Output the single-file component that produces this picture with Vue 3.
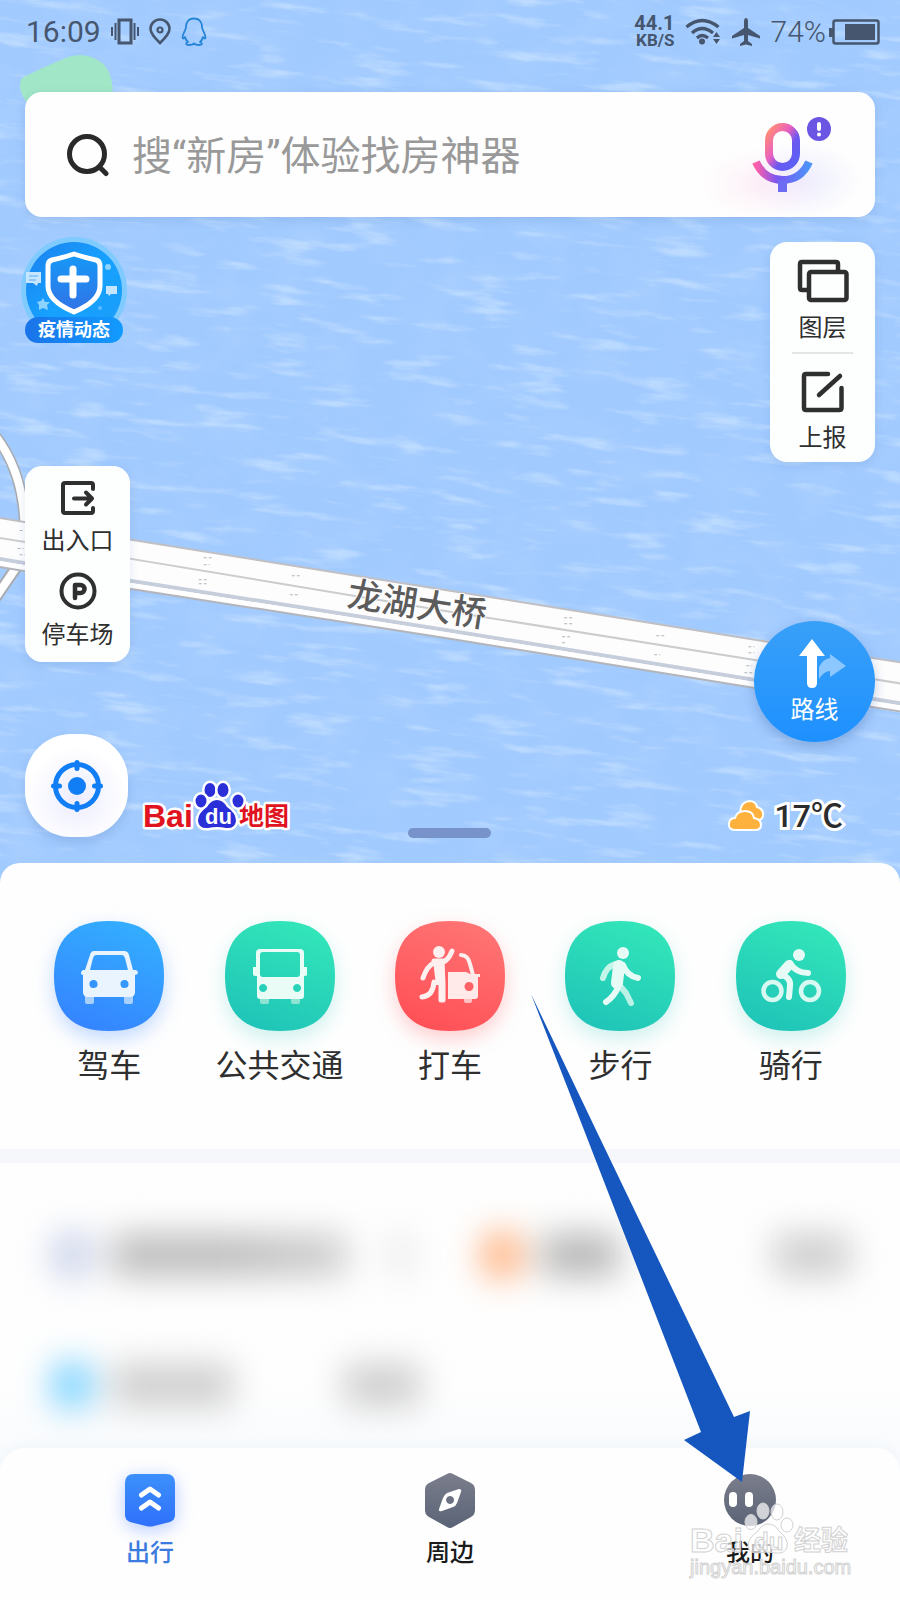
<script setup>
import { ref } from 'vue'

const keyword = ref('')

const modes = [
  { id: 'drive', label: '驾车', from: '#33aeff', to: '#3584ff', glow: 'rgba(53,132,255,.3)' },
  { id: 'bus', label: '公共交通', from: '#33e6b9', to: '#1fc4b8', glow: 'rgba(31,196,184,.22)' },
  { id: 'taxi', label: '打车', from: '#ff7474', to: '#ff5056', glow: 'rgba(255,80,86,.28)' },
  { id: 'walk', label: '步行', from: '#33e6b9', to: '#1fc4b8', glow: 'rgba(31,196,184,.22)' },
  { id: 'ride', label: '骑行', from: '#33e6b9', to: '#1fc4b8', glow: 'rgba(31,196,184,.22)' },
]
</script>

<template>
  <div class="page">
    <section class="map">
      <svg class="canvas" viewBox="0 0 900 882" preserveAspectRatio="xMidYMin slice" aria-hidden="true">
        <defs>
          <filter id="ripple" x="0" y="0" width="100%" height="100%">
            <feTurbulence type="fractalNoise" baseFrequency=".016 .09" numOctaves="5" seed="8" />
            <feColorMatrix values="0 0 0 0 .78  0 0 0 0 .91  0 0 0 0 1  3.6 0 0 0 -1.95" />
          </filter>
          <filter id="swell" x="0" y="0" width="100%" height="100%">
            <feTurbulence type="fractalNoise" baseFrequency=".02 .03" numOctaves="4" seed="3" />
            <feColorMatrix values="0 0 0 0 .5  0 0 0 0 .7  0 0 0 0 .97  2 0 0 0 -.8" />
          </filter>
        </defs>
        <rect width="900" height="882" fill="#a1caff" />
        <g transform="rotate(6 450 445)">
          <rect x="-100" y="-100" width="1100" height="1100" filter="url(#swell)" opacity=".25" />
          <rect x="-100" y="-100" width="1100" height="1100" filter="url(#ripple)" opacity=".38" />
        </g>
        <path d="M22 79 Q24 76 66 58 Q82 51 98 60 Q113 68 113 92 L113 110 H34 Q16 92 22 79Z" fill="#a1e6c6" />
        <path d="M-6 433 Q24 470 25 526" fill="none" stroke="#a9abb0" stroke-width="11" />
        <path d="M-6 433 Q24 470 25 526" fill="none" stroke="#fff" stroke-width="8" />
        <path d="M20 562 L-6 600" stroke="#a9abb0" stroke-width="12" />
        <path d="M20 562 L-6 600" stroke="#fff" stroke-width="8" />
        <path d="M-2 517 L130 539 L450 590 L767 641 L902 662 V712 L753 687 L450 638 L130 588 L-2 566Z" fill="#fdfdfe" />
        <path d="M-2 517 L130 539 L450 590 L767 641 L902 662" fill="none" stroke="#c0bfc3" stroke-width="2" />
        <path d="M-2 537 L130 558 L450 611 L753 659 L902 683" fill="none" stroke="#cbcccd" stroke-width="2" />
        <path d="M-2 558 L130 580 L450 630 L753 679 L902 703" fill="none" stroke="#c6cddb" stroke-width="4" />
        <path d="M-2 562 L130 584 L450 634 L753 683 L902 707" fill="none" stroke="#fff" stroke-width="4" />
        <path d="M-2 566 L130 588 L450 638 L753 687 L902 711" fill="none" stroke="#b3b5ba" stroke-width="2" />
        <g stroke="#b3b6ba" stroke-width="1" stroke-dasharray="3 2">
          <path d="M204 557h8M204 564h6M199 579h8M199 583h8M292 575h9M290 594h9M564 617h9M564 623h9M562 636h9M562 642h5M656 635h9M654 654h6M748 646h6M748 652h6M746 665h6M744 672h8M20 530h4M18 548h6M20 554h6" />
        </g>
        <text class="bridge" transform="translate(346 605) rotate(9)" x="0" y="0">龙湖大桥</text>
      </svg>

      <header class="status">
        <div class="status-side">
          <span class="clock">16:09</span>
          <svg width="28" height="28" viewBox="0 0 28 28" fill="none" stroke="#45566e">
            <rect x="8" y="2" width="12" height="23" stroke-width="3" />
            <path d="M1 9v9M4.500 5v17M23.500 5v17M27 9v9" stroke-width="2" />
          </svg>
          <svg width="22" height="28" viewBox="0 0 22 28" fill="none" stroke="#45566e" stroke-width="2.600">
            <path d="M11 25 Q1.500 16 1.500 11 A9.500 9.500 0 0 1 20.500 11 Q20.500 16 11 25Z" />
            <circle cx="11" cy="12" r="2.500" stroke-width="2.200" />
          </svg>
          <svg width="26" height="30" viewBox="0 0 26 30" fill="none" stroke="#2684d8" stroke-width="1.800" stroke-linejoin="round">
            <path d="M13 1.500 C7 1.500 5 6 5 10 C5 13 2 16 1.500 20 C1.500 22 2.500 22 4 20 C4.500 22 5.500 24 7 25 C4 26.500 4.500 28 8 28 C11 28 12 27.500 13 26.500 C14 27.500 15 28 18 28 C21.500 28 22 26.500 19 25 C20.500 24 21.500 22 22 20 C23.500 22 24.500 22 24.500 20 C24 16 21 13 21 10 C21 6 19 1.500 13 1.500Z" />
          </svg>
        </div>
        <div class="status-side right-side">
          <span class="speed"><b>44.1</b><b class="unit">KB/S</b></span>
          <svg width="36" height="28" viewBox="0 0 36 28" fill="none" stroke="#45566e" stroke-width="3.200">
            <path d="M1.500 9 Q17 -4 33.500 9M7 15 Q17 6 28 15M12 20 Q17 15 23 20" />
            <circle cx="17" cy="23.500" r="3" fill="#45566e" stroke="none" />
            <path d="M28 19l3.500-5 3.500 5zM28 21l3.500 5 3.500-5z" fill="#45566e" stroke="none" />
          </svg>
          <svg width="30" height="30" viewBox="0 0 30 30" fill="#45566e">
            <path d="M15 1 Q17 1 17 5 V11 L29 19 V21.500 L17 18 V24 L21 27 V29 L15 27.500 L9 29 V27 L13 24 V18 L1 21.500 V19 L13 11 V5 Q13 1 15 1Z" />
          </svg>
          <span class="percent">74%</span>
          <svg width="51" height="26" viewBox="0 0 51 26">
            <rect x="4.500" y="1.500" width="45" height="23" rx="2" fill="none" stroke="#45566e" stroke-width="2.500" />
            <path d="M0 9h4v9h-4z M16 5h30v16h-30z" fill="#45566e" />
          </svg>
        </div>
      </header>

      <form class="search" @submit.prevent>
        <svg width="44" height="44" viewBox="0 0 44 44" fill="none" stroke="#2a2a2a" stroke-width="5" stroke-linecap="round">
          <circle cx="21" cy="21" r="17.500" />
          <path d="M34 34.500l6 6" />
        </svg>
        <input v-model="keyword" type="text" aria-label="搜索" placeholder="搜“新房”体验找房神器" />
        <button type="button" class="mic" aria-label="语音搜索">
          <svg width="84" height="82" viewBox="0 0 84 82">
            <defs>
              <linearGradient id="micBody" x1="0" y1="0" x2="1" y2="1">
                <stop offset=".05" stop-color="#ff8a7a" />
                <stop offset=".4" stop-color="#e85fc0" />
                <stop offset=".65" stop-color="#6a58f0" />
                <stop offset="1" stop-color="#5b62f5" />
              </linearGradient>
              <linearGradient id="micArc" x1="0" y1="0" x2="1" y2="0">
                <stop offset="0" stop-color="#ff5fa8" />
                <stop offset=".4" stop-color="#7b56f2" />
                <stop offset="1" stop-color="#4d93f8" />
              </linearGradient>
            </defs>
            <rect x="19" y="13" width="27" height="40" rx="13.500" fill="none" stroke="url(#micBody)" stroke-width="8" />
            <path d="M6 48 Q14 66 32.500 66 Q51 66 59 48" fill="none" stroke="url(#micArc)" stroke-width="8" />
            <path d="M28 66h9v12h-9z" fill="#6d6cf3" />
            <circle cx="69" cy="15" r="12" fill="#6b55e3" />
            <path d="M69 10v5" stroke="#fff" stroke-width="4" stroke-linecap="round" />
            <circle cx="69" cy="20.500" r="2" fill="#fff" />
          </svg>
        </button>
      </form>

      <div class="overlay">
        <div class="left">
          <button type="button" class="epidemic">
            <svg viewBox="0 0 106 100" width="106" height="100" aria-hidden="true">
              <defs>
                <linearGradient id="badgeBg" x1="0" y1="0" x2="1" y2="1">
                  <stop offset="0" stop-color="#1c80ee" /><stop offset=".5" stop-color="#16a1ff" /><stop offset="1" stop-color="#1b9df8" />
                </linearGradient>
                <linearGradient id="shieldBg" x1="0" y1="0" x2="0" y2="1">
                  <stop offset="0" stop-color="#1699f6" /><stop offset="1" stop-color="#3273e6" />
                </linearGradient>
              </defs>
              <circle cx="53" cy="53" r="53" fill="#7fcbff" />
              <circle cx="53" cy="53" r="48" fill="url(#badgeBg)" />
              <path d="M53 17 Q65 21 75 23 Q79 24 79 29 V49 Q79 64 53 75 Q27 64 27 49 V29 Q27 24 31 23 Q41 21 53 17Z" fill="url(#shieldBg)" stroke="#fff" stroke-width="5" stroke-linejoin="round" />
              <path d="M52 32v26M40 42h25" stroke="#fff" stroke-width="7" stroke-linecap="round" />
              <path d="M5 35h15v11h-3l-1 3-4-3h-7zM85 49h11v8h-6l-2 2-1-2h-2z" fill="#c6e6ff" />
              <path d="M8 39h9M8 43h7" stroke="#58acf0" stroke-width="1" />
              <path d="M22 61l2 4 5 0-3 3 1 5-5-2-4 2 0-5-2-3 4-1z" fill="#8dd3ff" />
              <circle cx="87" cy="30" r="3" fill="#8dd3ff" /><circle cx="79" cy="71" r="2" fill="#59bbff" />
            </svg>
            <span class="pill">疫情动态</span>
          </button>
          <div class="panel panel-left">
            <button type="button">
              <svg width="36" height="36" viewBox="0 0 36 36" fill="none" stroke="#2f2f2f" stroke-width="4" stroke-linecap="round" stroke-linejoin="round">
                <path d="M33 9V5Q33 3 31 3H5Q3 3 3 5V31Q3 33 5 33H31Q33 33 33 31V28" />
                <path d="M14 18.500H32M26 12.500l6 6-6 6" />
              </svg>
              <span>出入口</span>
            </button>
            <button type="button">
              <svg width="38" height="38" viewBox="0 0 38 38" fill="none" stroke="#2f2f2f" stroke-width="4" stroke-linecap="round" stroke-linejoin="round">
                <circle cx="19" cy="19" r="16.500" />
                <path d="M16 26V13h5.500a4 4 0 0 1 0 8H16" stroke-width="4.500" />
              </svg>
              <span>停车场</span>
            </button>
          </div>
          <div class="corner">
            <button type="button" class="locate" aria-label="定位">
              <svg width="52" height="52" viewBox="0 0 52 52" fill="none" stroke="#117ef5">
                <circle cx="26" cy="26" r="21.500" stroke-width="5" />
                <path d="M26 2.500v6M26 43.500v6M2.500 26h6M43.500 26h6" stroke-width="5" stroke-linecap="round" />
                <circle cx="26" cy="26" r="9" fill="#117ef5" stroke="none" />
              </svg>
            </button>
            <svg class="logo" width="152" height="52" viewBox="0 0 152 52" role="img" aria-label="Baidu地图">
              <g stroke="#fff" stroke-width="5" stroke-linejoin="round" paint-order="stroke">
                <text x="2" y="47" class="bai">Bai</text>
                <text x="98" y="45" class="ditu">地图</text>
                <g fill="#2a2fd8">
                  <ellipse cx="69" cy="10" rx="5.500" ry="7" /><ellipse cx="82" cy="10" rx="5.500" ry="7" />
                  <ellipse cx="60" cy="21" rx="5.500" ry="6.500" /><ellipse cx="97" cy="21" rx="5.500" ry="6.500" />
                  <path d="M76 20 Q82 20 86 27 Q95 33 95 41 Q94 49 85 48 Q76 46 67 48 Q58 49 57 41 Q57 33 66 27 Q70 20 76 20Z" />
                </g>
              </g>
              <text x="64" y="44" class="du">du</text>
            </svg>
          </div>
        </div>

        <span class="handle"></span>

        <div class="right">
          <div class="panel panel-right">
            <button type="button">
              <svg width="52" height="44" viewBox="0 0 52 44" fill="none" stroke="#2f2f2f" stroke-width="4.500" stroke-linejoin="round">
                <path d="M11 31H5Q3 31 3 29V5Q3 3 5 3H39Q41 3 41 5V12" />
                <rect x="12" y="13" width="37.500" height="28" rx="2" />
              </svg>
              <span>图层</span>
            </button>
            <hr />
            <button type="button">
              <svg width="44" height="44" viewBox="0 0 44 44" fill="none" stroke="#2f2f2f" stroke-width="4.500" stroke-linejoin="round" stroke-linecap="round">
                <path d="M27 5H5Q3 5 3 7V39Q3 41 5 41H38Q40.500 41 40.500 39V19M18 26L39 7" />
              </svg>
              <span>上报</span>
            </button>
          </div>
          <button type="button" class="route">
            <svg width="52" height="54" viewBox="0 0 52 54">
              <path d="M20 42V30Q24 22 31 21V17L47 29L31 40V34Q25 34 20 42Z" fill="#8cc8ff" />
              <path d="M13 2L26 19H18V46Q18 51 13 51Q8 51 8 46V19H0Z" fill="#fff" />
            </svg>
            <span>路线</span>
          </button>
          <div class="weather">
            <svg width="38" height="34" viewBox="0 0 38 34" fill="#ffb13d" stroke="#fff" stroke-width="2">
              <path d="M13 13 Q14 3 22 2 Q29 2 30 8 Q37 10 36 17 Q35 22 28 21Z" />
              <path d="M8 31 Q1 31 2 24 Q3 19 8 19 Q10 12 18 12 Q26 12 27 19 Q34 20 34 26 Q34 31 28 31Z" />
            </svg>
            <span>17℃</span>
          </div>
        </div>
      </div>
    </section>

    <main class="sheet">
      <div class="modes">
        <button v-for="m in modes" :key="m.id" type="button" class="mode">
          <svg class="tile" viewBox="0 0 110 110" :style="{ filter: `drop-shadow(0 8px 10px ${m.glow})` }">
            <defs>
              <linearGradient :id="'g-' + m.id" x1=".7" y1="0" x2=".3" y2="1">
                <stop offset="0" :stop-color="m.from" /><stop offset="1" :stop-color="m.to" />
              </linearGradient>
            </defs>
            <path d="M55 0C92 0 110 18 110 55C110 92 92 110 55 110C18 110 0 92 0 55C0 18 18 0 55 0Z" :fill="`url(#g-${m.id})`" />
            <g v-if="m.id === 'drive'" fill="#eaf4ff">
              <path d="M31 72h9v9q0 2-2 2h-5q-2 0-2-2zM70 72h9v9q0 2-2 2h-5q-2 0-2-2z" fill="#a9d0fb" />
              <path fill-rule="evenodd" d="M40 30H70Q74 30 75 34L79 49H82Q84 50 84 52Q83 54 81 54V71Q81 76 76 76H34Q29 76 29 71V54Q27 54 27 52Q27 50 29 49H31L36 34Q37 30 40 30ZM42 34Q40 34 39 37L36 49H74L71 37Q70 34 68 34ZM39 59a4 4 0 1 0 1 8a4 4 0 1 0 -1 -8ZM70 59a4 4 0 1 0 1 8a4 4 0 1 0 -1 -8Z" />
            </g>
            <g v-else-if="m.id === 'bus'" fill="#e9fcf6">
              <path d="M35 74h9v7q0 2-2 2h-5q-2 0-2-2zM66 74h9v7q0 2-2 2h-5q-2 0-2-2z" fill="#8ee4d3" />
              <path fill-rule="evenodd" d="M35 28H75Q79 28 79 32V46H82V54Q82 55 79 55V75Q79 78 76 78H35Q32 78 32 75V55H30Q28 55 28 53V46H31V32Q31 28 35 28ZM38 31Q35 31 35 34V53Q35 56 38 56H72Q75 56 75 53V34Q75 31 72 31ZM38 63a4 4 0 1 0 .1 0ZM72 63a4 4 0 1 0 .1 0Z" />
            </g>
            <g v-else-if="m.id === 'taxi'" fill="none" stroke="#fff0f0" stroke-linecap="round">
              <circle cx="44" cy="31" r="6" fill="#fff0f0" stroke="none" />
              <path d="M28 57Q32 45 39 42Q52 44 57 30M27 76Q38 75 39 61" stroke-width="5" />
              <path d="M39 40H47L48 63V79M46 42V79" stroke-width="5" />
              <path d="M38 40H48V64H41Z" fill="#fff0f0" stroke="none" />
              <path d="M66 34Q73 34 75 43L78 54" stroke-width="4" />
              <path fill-rule="evenodd" d="M53 51H71L75 53H85V56H83V75Q83 78 80 78H53ZM74 61a4.500 4.500 0 1 0 .1 0Z" fill="#ffe9e9" stroke="none" />
              <path d="M69 78h8v2q0 2-2 2h-4q-2 0-2-2z" fill="#ffc0c1" stroke="none" />
            </g>
            <g v-else-if="m.id === 'walk'" fill="none" stroke="#e6fbf6" stroke-linecap="round" stroke-linejoin="round">
              <circle cx="58" cy="32" r="6" fill="#e6fbf6" stroke="none" />
              <path d="M38 57Q41 46 50 43" stroke="#c4f5e9" stroke-width="6" />
              <path d="M55 65L61 72L66 82" stroke="#baf1e7" stroke-width="6" />
              <path d="M54 45L52 62" stroke-width="12" />
              <path d="M58 44Q62 55 73 57M54 64Q50 75 41 81" stroke-width="6" />
            </g>
            <g v-else fill="none" stroke="#e6fbf6" stroke-linecap="round" stroke-linejoin="round">
              <circle cx="63" cy="34" r="6" fill="#e6fbf6" stroke="none" />
              <circle cx="36.500" cy="70" r="9" stroke="#d8f9f2" stroke-width="4.500" />
              <circle cx="74" cy="70" r="9" stroke="#d8f9f2" stroke-width="4.500" />
              <path d="M53 44L45 53" stroke-width="10" />
              <path d="M54 42Q60 52 72 52M46 54Q55 57 54 65L53 76" stroke-width="6" />
            </g>
          </svg>
          <span>{{ m.label }}</span>
        </button>
      </div>

      <div class="places" aria-hidden="true">
        <div class="place">
          <i class="dot indigo"></i><i class="smear long"></i><i class="smear faint"></i>
        </div>
        <div class="place">
          <i class="dot orange"></i><i class="smear dark short"></i><i class="smear short end"></i>
        </div>
        <div class="place">
          <i class="dot cyan"></i><i class="smear mid"></i><i class="smear short end"></i>
        </div>
      </div>
    </main>

    <nav class="tabs">
      <button type="button" class="tab active">
        <svg class="glow" width="54" height="56" viewBox="0 0 54 56">
          <defs>
            <linearGradient id="tabBlue" x1="0" y1="0" x2="0" y2="1"><stop offset="0" stop-color="#3c90fb" /><stop offset="1" stop-color="#2f70fb" /></linearGradient>
          </defs>
          <path d="M11 2H43Q52 2 52 11V43Q52 48 47 50L31 54Q27 55 23 54L7 50Q2 48 2 43V11Q2 2 11 2Z" fill="url(#tabBlue)" />
          <path d="M18.500 23L27 17L35.500 23M18.500 36L27 30L35.500 36" fill="none" stroke="#fff" stroke-width="5" stroke-linecap="round" stroke-linejoin="round" />
        </svg>
        <span>出行</span>
      </button>
      <button type="button" class="tab">
        <svg width="54" height="56" viewBox="0 0 54 56">
          <defs>
            <linearGradient id="tabGrey" x1="0" y1="0" x2="0" y2="1"><stop offset="0" stop-color="#7b7e8c" /><stop offset="1" stop-color="#5a6376" /></linearGradient>
          </defs>
          <path d="M24 2Q27 0 30 2L48 11Q52 13 52 18V38Q52 43 48 45L30 55Q27 57 24 55L6 45Q2 43 2 38V18Q2 13 6 11Z" fill="url(#tabGrey)" />
          <path fill-rule="evenodd" d="M36 17Q39 17 38 20L34 31Q33 34 30 35L19 39Q15 40 16 37L20 26Q21 23 24 21ZM27 24a4 4 0 1 0 .1 0Z" fill="#fff" />
        </svg>
        <span>周边</span>
      </button>
      <button type="button" class="tab">
        <svg width="54" height="56" viewBox="0 0 54 56">
          <circle cx="27" cy="28" r="26" fill="url(#tabGrey)" />
          <rect x="6" y="20" width="8" height="15" rx="4" fill="#fff" /><rect x="22" y="20" width="8" height="15" rx="4" fill="#fff" />
        </svg>
        <span>我的</span>
      </button>
      <svg class="mark" width="170" height="86" viewBox="0 0 170 86" role="img" aria-label="Baidu经验 jingyan.baidu.com">
        <g fill="#fff" fill-opacity=".7" stroke="#d2d2d2" stroke-width="1">
          <text x="5" y="53" class="mark-bai">Bai</text>
          <text x="109" y="51" class="mark-cn">经验</text>
          <ellipse cx="66" cy="23" rx="6" ry="7.500" /><ellipse cx="78" cy="12" rx="6" ry="8" />
          <ellipse cx="92" cy="13" rx="6" ry="8" /><ellipse cx="102" cy="26" rx="6" ry="7" />
          <path d="M83 25Q90 25 94 32Q104 40 102 48Q100 55 91 54Q82 52 74 54Q64 55 63 47Q63 39 73 32Q77 25 83 25Z" />
          <text x="69" y="51" class="mark-du">du</text>
          <text x="5" y="75" class="mark-url">jingyan.baidu.com</text>
        </g>
      </svg>
    </nav>

    <svg class="arrow" viewBox="0 0 900 1600" aria-hidden="true">
      <path d="M531 994L596 1130L734 1417L750 1411L742 1482L684 1440L701 1432L584 1130Z" fill="#1557bf" />
    </svg>
  </div>
</template>

<style>
body {
  margin: 0;
  background: #fff;
}
</style>

<style scoped>
.page {
  position: relative;
  display: flex;
  flex-direction: column;
  min-height: 100vh;
  overflow: hidden;
  font-family: Roboto, "Noto Sans CJK SC", sans-serif;
  color: #2f2f2f;
  background: #f9fbfd;
}
button {
  padding: 0;
  border: 0;
  background: none;
  font: inherit;
  color: inherit;
  cursor: pointer;
}
svg {
  display: block;
  flex: none;
}
.map {
  position: relative;
  padding-bottom: 46px;
}
.canvas {
  position: absolute;
  inset: 0;
  width: 100%;
  height: 100%;
}
.bridge {
  font: 500 35px "Noto Sans CJK SC", sans-serif;
  fill: #5c5c5c;
  stroke: #fff;
  stroke-width: 2px;
  paint-order: stroke;
}
.status {
  position: relative;
  display: flex;
  justify-content: space-between;
  align-items: center;
  height: 64px;
  padding: 0 20px 0 26px;
  color: #45566e;
}
.status-side {
  display: flex;
  align-items: center;
  gap: 10px;
}
.clock,
.percent {
  font-size: 30px;
  line-height: 32px;
}
.percent {
  margin-right: -7px;
  font-weight: 300;
}
.speed {
  display: flex;
  flex-direction: column;
  align-items: flex-end;
  font-size: 20px;
  line-height: 17px;
}
.speed .unit {
  font-size: 17px;
}
.search {
  position: relative;
  display: flex;
  align-items: center;
  height: 125px;
  margin: 28px 25px 0;
  padding: 0 41px;
  box-sizing: border-box;
  border-radius: 17px;
  background: radial-gradient(ellipse 60px 36px at 736px 92px, rgba(255, 230, 242, .6), transparent), radial-gradient(ellipse 60px 38px at 776px 88px, rgba(228, 228, 255, .7), transparent), #fefefe;
  box-shadow: 0 3px 10px rgba(70, 110, 170, .18);
}
.search input {
  flex: 1;
  min-width: 0;
  height: 60px;
  padding: 4px 0 0;
  box-sizing: border-box;
  margin-left: 22px;
  border: 0;
  outline: 0;
  background: none;
  font: 400 40px Roboto, "Noto Sans CJK SC", sans-serif;
  color: #333;
}
.search input::placeholder {
  color: #999;
  opacity: 1;
}
.overlay {
  position: relative;
  display: flex;
  justify-content: space-between;
  padding: 20px 25px 0;
}
.left {
  display: flex;
  flex-direction: column;
  align-items: flex-start;
}
.epidemic {
  display: flex;
  flex-direction: column;
  align-items: center;
  width: 98px;
  height: 107px;
}
.pill {
  position: relative;
  width: 98px;
  margin-top: -20px;
  border-radius: 13px;
  background: linear-gradient(90deg, #1a73e8, #129bff);
  color: #fff;
  font-size: 18px;
  font-weight: 700;
  line-height: 26px;
}
.panel {
  display: flex;
  flex-direction: column;
  align-items: center;
  width: 105px;
  border-radius: 17px;
  background: #fdfefe;
  box-shadow: 0 3px 10px rgba(70, 110, 170, .15);
  font-size: 24px;
  line-height: 30px;
}
.panel button {
  display: flex;
  flex-direction: column;
  align-items: center;
}
.panel-left {
  gap: 16px;
  box-sizing: border-box;
  margin-top: 122px;
  padding: 14px 0 12px;
}
.panel-left button {
  gap: 10px;
}
.panel-right {
  box-sizing: border-box;
  margin-top: 5px;
  padding: 17px 0 9px;
}
.panel-right button {
  gap: 10px;
}
.panel-right hr {
  width: 61px;
  height: 2px;
  margin: 9px 0 15px;
  border: 0;
  background: #e4e5e6;
}
.corner {
  display: flex;
  align-items: flex-end;
  gap: 13px;
  margin-top: 72px;
}
.locate {
  display: flex;
  align-items: center;
  justify-content: center;
  width: 103px;
  height: 103px;
  border-radius: 46px;
  background: radial-gradient(circle at 50% 62%, #ececff, #fff 62%);
  box-shadow: 0 5px 10px rgba(70, 110, 170, .2);
}
.logo {
  overflow: visible;
  margin-bottom: 5px;
}
.bai {
  font: 700 32px "Liberation Sans", sans-serif;
  fill: #e01320;
}
.ditu {
  font: 700 25px "Noto Sans CJK SC", sans-serif;
  fill: #e01320;
}
.du {
  font: 700 22px "Liberation Sans", sans-serif;
  fill: #fff;
}
.handle {
  position: absolute;
  left: 50%;
  bottom: -1px;
  width: 83px;
  height: 10px;
  margin-left: -42px;
  border-radius: 5px;
  background: #7793c9;
}
.right {
  display: flex;
  flex-direction: column;
  align-items: flex-end;
}
.route {
  display: flex;
  flex-direction: column;
  align-items: center;
  gap: 4px;
  width: 121px;
  height: 121px;
  margin-top: 159px;
  padding-top: 16px;
  border-radius: 50%;
  background: linear-gradient(#38a0f8, #1e90ff);
  box-shadow: 0 5px 12px rgba(50, 90, 150, .3);
  color: #fff;
  font-size: 24px;
  line-height: 30px;
  box-sizing: border-box;
}
.route svg {
  margin-left: 20px;
}
.weather {
  display: flex;
  align-items: center;
  gap: 10px;
  margin: 55px 32px 0 0;
  color: #2c2c2c;
  font-size: 32px;
  font-weight: 500;
  line-height: 38px;
}
.weather span {
  -webkit-text-stroke: 6px #fff;
  paint-order: stroke fill;
}
.sheet {
  position: relative;
  flex: 1;
  margin-top: -20px;
  border-radius: 20px 20px 0 0;
  background: linear-gradient(#fefefe 520px, #f9fbfd);
}
.modes {
  display: grid;
  grid-template-columns: repeat(5, 1fr);
  padding: 58px 24px 62px;
  border-bottom: 14px solid #f5f7fa;
}
.mode {
  display: flex;
  flex-direction: column;
  align-items: center;
  gap: 14px;
  font-size: 32px;
  line-height: 42px;
  white-space: nowrap;
}
.tile {
  width: 110px;
  height: 110px;
}
.places {
  display: grid;
  grid-template-columns: 1fr 1fr;
  row-gap: 86px;
  padding: 70px 16px 40px 24px;
}
.place {
  display: flex;
  align-items: center;
  height: 44px;
  padding: 0 34px 0 28px;
  filter: blur(17px);
}
.dot {
  width: 40px;
  height: 46px;
  margin-right: 20px;
  border-radius: 16px;
}
.indigo { background: #c8d0ea; }
.orange { background: #ffae7a; }
.cyan { background: #70ceff; }
.smear {
  height: 42px;
  background: #cdcdcd;
}
.long { width: 235px; background: linear-gradient(90deg, #bbb 50%, #cfcfcf); }
.mid { width: 120px; }
.short { width: 76px; }
.dark { background: #b5b5b5; }
.end { margin-left: auto; }
.faint {
  width: 20px;
  margin-left: 44px;
  background: #e6e6e6;
}
.tabs {
  position: relative;
  display: grid;
  grid-template-columns: repeat(3, 1fr);
  padding: 24px 0 30px;
  border-radius: 24px 24px 0 0;
  background: #fefefe;
  box-shadow: 0 -2px 12px rgba(100, 130, 180, .05);
}
.tab {
  display: flex;
  flex-direction: column;
  align-items: center;
  gap: 8px;
  color: #1a1a1a;
  font-size: 24px;
  font-weight: 500;
  line-height: 34px;
}
.tab.active {
  color: #3b7be0;
}
.glow {
  filter: drop-shadow(0 4px 9px rgba(50, 110, 255, .35));
}
.mark {
  position: absolute;
  right: 45px;
  bottom: 15px;
}
.mark-bai { font: 700 34px "Liberation Sans", sans-serif; }
.mark-du { font: 700 24px "Liberation Sans", sans-serif; }
.mark-cn { font: 700 27px "Noto Sans CJK SC", sans-serif; }
.mark-url { font: 400 20px "Liberation Sans", sans-serif; }
.arrow {
  position: absolute;
  top: 0;
  left: 0;
  width: 100%;
  pointer-events: none;
}
</style>
